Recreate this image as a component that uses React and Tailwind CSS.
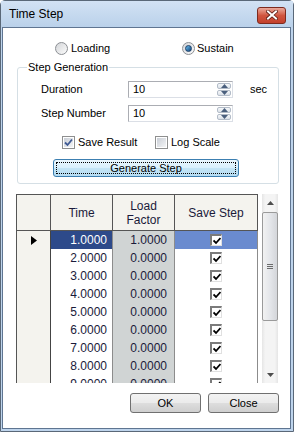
import React from "react";

const rows = [1, 2, 3, 4, 5, 6, 7, 8, 9];

const Radio = ({ checked }) => (
  <span className="flex h-[13px] w-[13px] items-center justify-center rounded-full border border-[#8c8f94] bg-gradient-to-br from-[#d4d6d9] to-[#fbfbfb]">
    {checked && (
      <span className="h-[7px] w-[7px] rounded-full border border-[#1b3d66] bg-gradient-to-br from-[#6cc0f0] to-[#12457c]" />
    )}
  </span>
);

const Check = ({ checked }) => (
  <span className="flex h-[13px] w-[13px] border border-[#8e8f8f] bg-white p-[1px]">
    <span className="flex h-full w-full items-center justify-center bg-gradient-to-br from-[#c9ced6] to-[#f4f5f6]">
      {checked && (
        <svg width="9" height="9" viewBox="0 0 9 9">
          <path d="M1 4.5 L3.5 7 L8 1.5" fill="none" stroke="#3f5a94" strokeWidth="1.8" />
        </svg>
      )}
    </span>
  </span>
);

const GridCheck = () => (
  <span className="flex h-[12px] w-[12px] items-center justify-center border-t-2 border-l-2 border-r border-b border-t-[#7b7b7b] border-l-[#7b7b7b] border-r-[#e0e0e0] border-b-[#e0e0e0] bg-white">
    <svg width="8" height="8" viewBox="0 0 8 8">
      <path d="M0.5 3.5 L3 6 L7.5 1" fill="none" stroke="#000" strokeWidth="1.8" />
    </svg>
  </span>
);

const SpinBtn = ({ up }) => (
  <span className="flex flex-1 items-center justify-center rounded-[2px] border border-[#b3bcc8] bg-gradient-to-b from-[#f6f8fa] to-[#dce2e9]">
    <svg width="7" height="4" viewBox="0 0 7 4">
      <path d={up ? "M0 4 L3.5 0 L7 4 Z" : "M0 0 L3.5 4 L7 0 Z"} fill="#4a5f7d" />
    </svg>
  </span>
);

const Spin = ({ value }) => (
  <div className="flex h-[17px] w-[105px] items-center border border-[#abadb3] border-b-[#dbdfe6] border-r-[#dbdfe6] bg-white">
    <span className="flex-1 pl-[4px] leading-none">{value}</span>
    <div className="flex h-full w-[16px] flex-col gap-[1px] p-[1px]">
      <SpinBtn up />
      <SpinBtn />
    </div>
  </div>
);

const WinButton = ({ children }) => (
  <div className="flex h-[20px] w-[71px] items-center justify-center rounded-[3px] border border-[#707070] bg-[linear-gradient(#f3f3f3,#ebebeb_48%,#dddddd_52%,#cfcfcf)] text-[11px]">
    {children}
  </div>
);

export default function App() {
  return (
    <div className="flex h-[432px] w-[294px] flex-col rounded-t-[5px] border border-[#5a6878] bg-[#bed4ec] font-['Liberation_Sans',Arial,sans-serif] text-[11px] text-black">
      {/* title bar */}
      <div className="flex h-[26px] items-center justify-between bg-gradient-to-b from-[#d2e2f4] to-[#bad1ea] pl-[8px] pr-[7px]">
        <span className="text-[12px]">Time Step</span>
        <div className="mt-[2px] flex h-[17px] w-[29px] items-center justify-center rounded-[3px] border border-[#7d2a1e] bg-gradient-to-b from-[#e9a99b] via-[#d0553f] to-[#c3402c]">
          <svg width="12" height="10" viewBox="0 0 12 10">
            <path d="M2 1.5 L10 8.5 M10 1.5 L2 8.5" stroke="#5a1c14" strokeWidth="3.6" strokeLinecap="square" />
            <path d="M2 1.5 L10 8.5 M10 1.5 L2 8.5" stroke="#fff" strokeWidth="2" strokeLinecap="square" />
          </svg>
        </div>
      </div>

      {/* client area */}
      <div className="mb-[2px] ml-[1px] mr-[2px] flex flex-1 flex-col border border-[#5f7591] bg-white">
        {/* radios */}
        <div className="mt-[14px] flex h-[13px] items-center pl-[52px]">
          <div className="flex w-[127px] items-center gap-[3px]">
            <Radio />
            <span>Loading</span>
          </div>
          <div className="flex items-center gap-[2px]">
            <Radio checked />
            <span>Sustain</span>
          </div>
        </div>

        {/* group box */}
        <div className="relative ml-[14px] mt-[12px] h-[117px] w-[262px] rounded-[3px] border border-[#d5dfe5]">
          <span className="absolute left-[9px] top-[-8px] bg-white px-[1px] leading-[14px]">Step Generation</span>
          <div className="flex flex-col pt-[13px]">
            <div className="flex h-[17px] items-center pl-[23px]">
              <span className="w-[87px]">Duration</span>
              <Spin value="10" />
              <span className="ml-[17px]">sec</span>
            </div>
            <div className="mt-[7px] flex h-[17px] items-center pl-[23px]">
              <span className="w-[87px]">Step Number</span>
              <Spin value="10" />
            </div>
            <div className="mt-[14px] flex h-[13px] items-center pl-[44px]">
              <div className="flex w-[93px] items-center gap-[3px]">
                <Check checked />
                <span>Save Result</span>
              </div>
              <div className="flex items-center gap-[3px]">
                <Check />
                <span>Log Scale</span>
              </div>
            </div>
            <div className="ml-[35px] mt-[10px] h-[18px] w-[186px] rounded-[3px] border border-[#3c7fb1] bg-[linear-gradient(#eaf6fd,#d9f0fc_48%,#c4e5f6_52%,#b5dcf2)] p-[2px]">
              <div className="flex h-full items-center justify-center border border-dotted border-black">
                Generate Step
              </div>
            </div>
          </div>
        </div>

        {/* grid */}
        <div className="ml-[13px] mt-[10px] flex h-[189px]">
          <div className="h-full w-[242px] overflow-hidden border-l border-t border-[#555] font-['Liberation_Sans',Arial,sans-serif] text-[12px] text-[#1a1a3a]">
            <div className="grid h-[36px] grid-cols-[34px_62px_62px_83px] bg-[#f4f3ee] text-center leading-[14px]">
              <div className="border-b border-r border-[#555]" />
              <div className="flex items-center justify-center border-b border-r border-[#555]">Time</div>
              <div className="flex items-center justify-center border-b border-r border-[#555]">
                Load
                <br />
                Factor
              </div>
              <div className="flex items-center justify-center border-b border-r border-[#555]">Save Step</div>
            </div>
            {rows.map((n) => {
              const sel = n === 1;
              return (
                <div key={n} className="grid h-[18px] grid-cols-[34px_62px_62px_83px]">
                  <div className="flex items-center justify-center border-b border-r border-[#444] bg-[#f4f3ee]">
                    {sel && (
                      <svg width="6" height="9" viewBox="0 0 6 9">
                        <path d="M0 0 L6 4.5 L0 9 Z" fill="#000" />
                      </svg>
                    )}
                  </div>
                  <div
                    className={
                      sel
                        ? "flex items-center justify-end border-b border-r border-[#8c8c8c] bg-[#2d4a8a] pr-[5px] text-white"
                        : "flex items-center justify-end border-b border-r border-[#8c8c8c] bg-white pr-[5px]"
                    }
                  >
                    {n}.0000
                  </div>
                  <div className="flex items-center justify-end border-b border-r border-[#8c8c8c] bg-[#d0d4d4] pr-[7px]">
                    {sel ? "1.0000" : "0.0000"}
                  </div>
                  <div
                    className={
                      sel
                        ? "flex items-center justify-center border-b border-r border-[#8c8c8c] bg-[#6a8bcf]"
                        : "flex items-center justify-center border-b border-r border-[#8c8c8c] bg-white"
                    }
                  >
                    <GridCheck />
                  </div>
                </div>
              );
            })}
          </div>

          {/* scrollbar */}
          <div className="ml-[4px] flex h-full w-[16px] flex-col bg-[linear-gradient(90deg,#e5e5e5,#f4f4f4_20%,#f4f4f4_80%,#e5e5e5)]">
            <div className="flex h-[17px] items-center justify-center">
              <svg width="7" height="4" viewBox="0 0 7 4">
                <path d="M0 4 L3.5 0 L7 4 Z" fill="#4d4d4d" />
              </svg>
            </div>
            <div className="mt-[1px] flex h-[109px] items-center justify-center rounded-[2px] border border-[#9a9a9a] bg-[linear-gradient(90deg,#f2f2f2,#e4e6ea_50%,#d4d6da)]">
              <div className="flex flex-col gap-[1px]">
                <span className="h-[1px] w-[6px] bg-[#6b6b6b]" />
                <span className="h-[1px] w-[6px] bg-[#6b6b6b]" />
                <span className="h-[1px] w-[6px] bg-[#6b6b6b]" />
              </div>
            </div>
            <div className="flex-1" />
            <div className="flex h-[17px] items-center justify-center">
              <svg width="7" height="4" viewBox="0 0 7 4">
                <path d="M0 0 L3.5 4 L7 0 Z" fill="#4d4d4d" />
              </svg>
            </div>
          </div>
        </div>

        {/* buttons */}
        <div className="mt-[10px] flex justify-end gap-[7px] pr-[11px]">
          <WinButton>OK</WinButton>
          <WinButton>Close</WinButton>
        </div>
      </div>
    </div>
  );
}
